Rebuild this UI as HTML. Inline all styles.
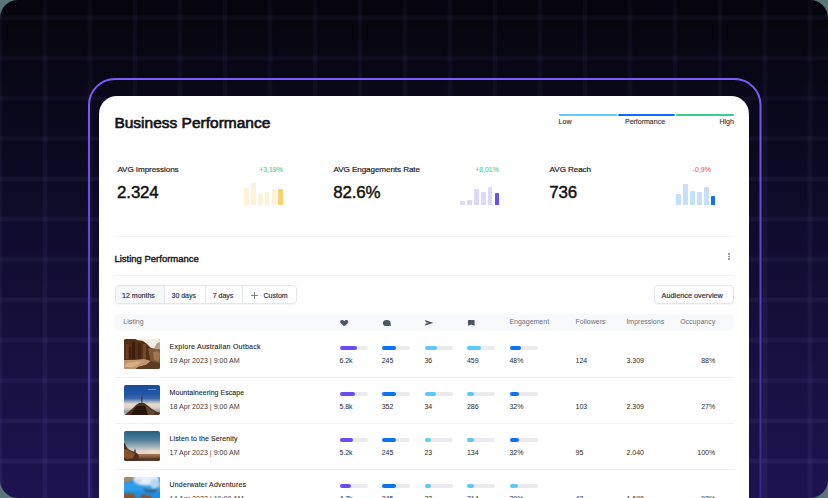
<!DOCTYPE html>
<html><head><meta charset="utf-8">
<style>
*{box-sizing:border-box;margin:0;padding:0}
html,body{width:828px;height:498px;overflow:hidden;background:#5a7479}
body{position:relative;font-family:"Liberation Sans",sans-serif;color:#1a1a1a}
.bg{position:absolute;left:0;top:0;width:828px;height:498px;border-radius:18px;overflow:hidden;
background:linear-gradient(to bottom,#06050d 0%,#0b0920 30%,#160f3b 65%,#1d1350 100%)}
.grid{position:absolute;left:0;top:0;width:828px;height:498px;
background-image:linear-gradient(to right,transparent 0,rgba(165,150,235,0.075) 1.5px,rgba(165,150,235,0.075) 4.5px,transparent 6px),
linear-gradient(to bottom,transparent 0,rgba(165,150,235,0.075) 1.5px,rgba(165,150,235,0.075) 4.5px,transparent 6px);
background-size:45px 100%,100% 40.3px;background-position:-3px 0,0 14.8px;-webkit-mask-image:linear-gradient(to bottom,rgba(0,0,0,0.55),#000);mask-image:linear-gradient(to bottom,rgba(0,0,0,0.55),#000)}
.frame{position:absolute;left:88px;top:78px}
.card{position:absolute;left:99px;top:96px;width:650px;height:420px;background:#fff;border-radius:18px}
.t{position:absolute;white-space:nowrap}
.abs{position:absolute}
</style></head><body>
<div class="bg"><div class="grid"></div></div>
<svg class="frame" width="674" height="430" viewBox="0 0 674 430">
<defs><linearGradient id="fg" gradientUnits="userSpaceOnUse" x1="0" y1="0" x2="0" y2="420"><stop offset="0" stop-color="#7c5df9"/><stop offset="0.34" stop-color="#6349d9"/><stop offset="0.77" stop-color="#4434a2"/><stop offset="1" stop-color="#38298a"/></linearGradient></defs>
<rect x="1" y="1" width="671.5" height="460" rx="26" ry="26" fill="none" stroke="url(#fg)" stroke-width="2"/>
</svg>
<div class="card"></div>
<div class="t" style="left:114.40px;top:115px;font-size:15.5px;line-height:15.5px;font-weight:400;color:#121212;-webkit-text-stroke:0.65px #121212">Business Performance</div>
<div class="abs " style="left:559.00px;top:114.00px;width:57.50px;height:2.00px;background:#5ecbfa;border-radius:1px"></div>
<div class="abs " style="left:618.00px;top:114.00px;width:57.00px;height:2.00px;background:#0b6dff;border-radius:1px"></div>
<div class="abs " style="left:676.00px;top:114.00px;width:57.50px;height:2.00px;background:#36cf8c;border-radius:1px"></div>
<div class="t" style="left:558.60px;top:118px;font-size:7px;line-height:7px;font-weight:400;color:#333;-webkit-text-stroke:0.12px #333">Low</div>
<div class="t" style="left:645.00px;transform:translateX(-50%);top:118px;font-size:7px;line-height:7px;font-weight:400;color:#333;-webkit-text-stroke:0.12px #333">Performance</div>
<div class="t" style="right:94.20px;top:118px;font-size:7px;line-height:7px;font-weight:400;color:#333;-webkit-text-stroke:0.12px #333">High</div>
<div class="t" style="left:117.40px;top:166px;font-size:8.1px;line-height:8.1px;font-weight:400;color:#1c1c1c;letter-spacing:-0.08px;-webkit-text-stroke:0.2px #1c1c1c">AVG Impressions</div>
<div class="t" style="left:117.10px;top:185px;font-size:16.9px;line-height:16.9px;font-weight:400;color:#111;letter-spacing:-0.15px;-webkit-text-stroke:0.45px #111">2.324</div>
<div class="t" style="right:545.20px;top:167px;font-size:6.9px;line-height:6.9px;font-weight:400;color:#4fd39a;-webkit-text-stroke:0.12px #4fd39a">+3,19%</div>
<div class="abs " style="left:244.20px;top:187.90px;width:4.50px;height:17.10px;background:#fdf1d8;border-radius:1px 1px 0 0"></div>
<div class="abs " style="left:251.20px;top:183.30px;width:4.50px;height:21.70px;background:#fdf1d8;border-radius:1px 1px 0 0"></div>
<div class="abs " style="left:258.10px;top:194.10px;width:4.50px;height:10.90px;background:#fdf1d8;border-radius:1px 1px 0 0"></div>
<div class="abs " style="left:264.90px;top:191.90px;width:4.50px;height:13.10px;background:#fdf1d8;border-radius:1px 1px 0 0"></div>
<div class="abs " style="left:271.80px;top:189.10px;width:4.50px;height:15.90px;background:#fdf1d8;border-radius:1px 1px 0 0"></div>
<div class="abs " style="left:278.40px;top:188.60px;width:4.50px;height:16.40px;background:#fcd06e;border-radius:1px 1px 0 0"></div>
<div class="t" style="left:333.50px;top:166px;font-size:8.1px;line-height:8.1px;font-weight:400;color:#1c1c1c;letter-spacing:-0.08px;-webkit-text-stroke:0.2px #1c1c1c">AVG Engagements Rate</div>
<div class="t" style="left:333.20px;top:185px;font-size:16.9px;line-height:16.9px;font-weight:400;color:#111;letter-spacing:-0.15px;-webkit-text-stroke:0.45px #111">82.6%</div>
<div class="t" style="right:329.20px;top:167px;font-size:6.9px;line-height:6.9px;font-weight:400;color:#4fd39a;-webkit-text-stroke:0.12px #4fd39a">+8,01%</div>
<div class="abs " style="left:460.20px;top:201.20px;width:4.50px;height:3.80px;background:#ddd7fd;border-radius:1px 1px 0 0"></div>
<div class="abs " style="left:467.20px;top:200.20px;width:4.50px;height:4.80px;background:#ddd7fd;border-radius:1px 1px 0 0"></div>
<div class="abs " style="left:474.10px;top:189.30px;width:4.50px;height:15.70px;background:#ddd7fd;border-radius:1px 1px 0 0"></div>
<div class="abs " style="left:481.00px;top:191.90px;width:4.50px;height:13.10px;background:#ddd7fd;border-radius:1px 1px 0 0"></div>
<div class="abs " style="left:487.90px;top:186.90px;width:4.50px;height:18.10px;background:#ddd7fd;border-radius:1px 1px 0 0"></div>
<div class="abs " style="left:494.70px;top:193.30px;width:4.50px;height:11.70px;background:#6b4ef2;border-radius:1px 1px 0 0"></div>
<div class="t" style="left:549.60px;top:166px;font-size:8.1px;line-height:8.1px;font-weight:400;color:#1c1c1c;letter-spacing:-0.08px;-webkit-text-stroke:0.2px #1c1c1c">AVG Reach</div>
<div class="t" style="left:549.30px;top:185px;font-size:16.9px;line-height:16.9px;font-weight:400;color:#111;letter-spacing:-0.15px;-webkit-text-stroke:0.45px #111">736</div>
<div class="t" style="right:117.20px;top:167px;font-size:6.9px;line-height:6.9px;font-weight:400;color:#f26b6b;-webkit-text-stroke:0.12px #f26b6b">-0,9%</div>
<div class="abs " style="left:676.40px;top:194.10px;width:4.50px;height:10.90px;background:#c6e0fc;border-radius:1px 1px 0 0"></div>
<div class="abs " style="left:683.30px;top:183.60px;width:4.50px;height:21.40px;background:#c6e0fc;border-radius:1px 1px 0 0"></div>
<div class="abs " style="left:690.20px;top:190.80px;width:4.50px;height:14.20px;background:#c6e0fc;border-radius:1px 1px 0 0"></div>
<div class="abs " style="left:697.10px;top:192.10px;width:4.50px;height:12.90px;background:#c6e0fc;border-radius:1px 1px 0 0"></div>
<div class="abs " style="left:704.00px;top:187.30px;width:4.50px;height:17.70px;background:#c6e0fc;border-radius:1px 1px 0 0"></div>
<div class="abs " style="left:710.80px;top:196.10px;width:4.50px;height:8.90px;background:#0b73f4;border-radius:1px 1px 0 0"></div>
<div class="abs " style="left:114.00px;top:236.00px;width:619.50px;height:1.00px;background:#f4f4f6"></div>
<div class="t" style="left:114.40px;top:254px;font-size:9.5px;line-height:9.5px;font-weight:400;color:#161616;-webkit-text-stroke:0.4px #161616">Listing Performance</div>
<div class="abs " style="left:728.00px;top:253.20px;width:1.60px;height:1.60px;background:#8d9099;border-radius:50%"></div>
<div class="abs " style="left:728.00px;top:255.70px;width:1.60px;height:1.60px;background:#8d9099;border-radius:50%"></div>
<div class="abs " style="left:728.00px;top:258.20px;width:1.60px;height:1.60px;background:#8d9099;border-radius:50%"></div>
<div class="abs " style="left:114.00px;top:275.00px;width:619.50px;height:1.00px;background:#f1f1f3"></div>
<div class="abs " style="left:114.50px;top:285.40px;width:182.20px;height:18.90px;border:1px solid #e4e6eb;border-radius:4px;box-shadow:0 1px 1px rgba(16,24,40,0.04);overflow:hidden"></div>
<div class="abs " style="left:115.50px;top:286.40px;width:48.00px;height:16.90px;background:#f7f8fa;border-radius:3px 0 0 3px"></div>
<div class="abs " style="left:163.50px;top:286.40px;width:1.00px;height:16.90px;background:#e4e6eb"></div>
<div class="abs " style="left:204.90px;top:286.40px;width:1.00px;height:16.90px;background:#e4e6eb"></div>
<div class="abs " style="left:241.70px;top:286.40px;width:1.00px;height:16.90px;background:#e4e6eb"></div>
<div class="t" style="left:122.10px;top:292px;font-size:7px;line-height:7px;font-weight:400;color:#2d3344;-webkit-text-stroke:0.18px #2d3344">12 months</div>
<div class="t" style="left:171.50px;top:292px;font-size:7px;line-height:7px;font-weight:400;color:#2d3344;-webkit-text-stroke:0.18px #2d3344">30 days</div>
<div class="t" style="left:212.70px;top:292px;font-size:7px;line-height:7px;font-weight:400;color:#2d3344;-webkit-text-stroke:0.18px #2d3344">7 days</div>
<div class="abs " style="left:251.40px;top:295.20px;width:6.40px;height:0.75px;background:#7d8290"></div>
<div class="abs " style="left:254.20px;top:292.20px;width:0.75px;height:6.40px;background:#7d8290"></div>
<div class="t" style="left:263.50px;top:292px;font-size:7px;line-height:7px;font-weight:400;color:#2d3344;-webkit-text-stroke:0.18px #2d3344">Custom</div>
<div class="abs " style="left:654.00px;top:285.20px;width:79.50px;height:19.10px;border:1px solid #e4e6eb;border-radius:4px;box-shadow:0 1px 1px rgba(16,24,40,0.04)"></div>
<div class="t" style="left:661.60px;top:292px;font-size:7.3px;line-height:7.3px;font-weight:400;color:#2d3344;-webkit-text-stroke:0.18px #2d3344">Audience overview</div>
<div class="abs " style="left:114.30px;top:314.00px;width:620.00px;height:17.40px;background:#f8f9fb;border-radius:5px"></div>
<div class="t" style="left:123.30px;top:318px;font-size:7px;line-height:7px;font-weight:400;color:#6b7280;">Listing</div>
<svg class="abs" style="left:340px;top:319.5px" width="8.5" height="6.5" viewBox="0 0 17 13"><path d="M8.5 13 L1.6 6.6 C-0.6 4.5 0.2 0.6 3.6 0.2 C5.6 0 7.3 1.1 8.5 2.6 C9.7 1.1 11.4 0 13.4 0.2 C16.8 0.6 17.6 4.5 15.4 6.6 Z" fill="#4b5563"/></svg>
<svg class="abs" style="left:382.8px;top:319.6px" width="8.3" height="6.6" viewBox="0 0 16.6 13.2"><ellipse cx="7.6" cy="6.3" rx="7.6" ry="6.3" fill="#4b5563"/><path d="M11.5 10 L16.6 13.2 L14.5 7.5 Z" fill="#4b5563"/></svg>
<svg class="abs" style="left:424.8px;top:320px" width="8.2" height="5.8" viewBox="0 0 16.4 11.6"><path d="M0 0 L16.4 5.8 L0 11.6 L1.5 7 L8 5.8 L1.5 4.6 Z" fill="#4b5563"/></svg>
<svg class="abs" style="left:468.4px;top:320px" width="6.6" height="5.8" viewBox="0 0 13.2 11.6"><path d="M0 1 Q0 0 1 0 L12.2 0 Q13.2 0 13.2 1 L13.2 11.6 L6.6 8.8 L0 11.6 Z" fill="#4b5563"/></svg>
<div class="t" style="left:509.40px;top:318px;font-size:7px;line-height:7px;font-weight:400;color:#6b7280;">Engagement</div>
<div class="t" style="left:575.60px;top:318px;font-size:7px;line-height:7px;font-weight:400;color:#6b7280;">Followers</div>
<div class="t" style="left:626.40px;top:318px;font-size:7px;line-height:7px;font-weight:400;color:#6b7280;">Impressions</div>
<div class="t" style="right:112.80px;top:318px;font-size:7px;line-height:7px;font-weight:400;color:#6b7280;">Occupancy</div>
<div class="abs" style="left:124px;top:339.40px;width:36px;height:30px;border-radius:2px;overflow:hidden"><svg width="36" height="30" viewBox="0 0 36 30"><rect width="36" height="30" fill="#52301a"/><g style="filter:blur(0.6px)">
<rect x="-3" y="-3" width="42" height="36" fill="#52301a"/>
<polygon points="6,-3 39,-3 39,3 34,4 31,10 27,9 23,5 19,2 13,1" fill="#f6ecdf"/>
<polygon points="29,11 33,4 39,3 39,13" fill="#b8a08c"/>
<rect x="8" y="3" width="3" height="17" fill="#3a1e0c"/><rect x="14" y="4" width="2.5" height="16" fill="#40220e"/><rect x="2" y="5" width="2.5" height="15" fill="#6a3e20"/>
<rect x="19" y="5" width="3" height="15" fill="#73482a"/><rect x="5" y="8" width="2" height="12" fill="#3e200e"/>
<polygon points="24,9 39,11 39,26 27,24" fill="#7e5636"/>
<polygon points="29,13 33,12 36,14 35,22 30,21" fill="#a07856"/>
<polygon points="-3,21 10,21 20,20 27,22 22,26 14,28 9,33 -3,33" fill="#c09670"/>
<polygon points="3,24 12,23 18,22 14,26 8,28 1,28" fill="#d8b088"/>
<polygon points="14,28 22,26 27,22 39,25 39,33 9,33" fill="#5e3a20"/>
</g></svg></div>
<div class="t" style="left:169.60px;top:343px;font-size:7px;line-height:7px;font-weight:400;color:#1c1c1c;letter-spacing:0.26px;-webkit-text-stroke:0.1px #1c1c1c">Explore Australian Outback</div>
<div class="t" style="left:169.60px;top:358px;font-size:7.1px;line-height:7.1px;font-weight:400;color:#3c3c3c;">19 Apr 2023 | 9:00 AM</div>
<div class="abs " style="left:339.60px;top:346.00px;width:28.40px;height:4.00px;background:#ebebef;border-radius:2px"></div>
<div class="abs " style="left:339.60px;top:346.00px;width:17.00px;height:4.00px;background:#6c4cf1;border-radius:2px"></div>
<div class="t" style="left:339.40px;top:357px;font-size:7px;line-height:7px;font-weight:400;color:#2a2a2a;">6.2k</div>
<div class="abs " style="left:381.90px;top:346.00px;width:28.40px;height:4.00px;background:#ebebef;border-radius:2px"></div>
<div class="abs " style="left:381.90px;top:346.00px;width:14.40px;height:4.00px;background:#0b74f5;border-radius:2px"></div>
<div class="t" style="left:381.70px;top:357px;font-size:7px;line-height:7px;font-weight:400;color:#2a2a2a;">245</div>
<div class="abs " style="left:424.60px;top:346.00px;width:28.40px;height:4.00px;background:#ebebef;border-radius:2px"></div>
<div class="abs " style="left:424.60px;top:346.00px;width:12.50px;height:4.00px;background:#5ccaf9;border-radius:2px"></div>
<div class="t" style="left:424.40px;top:357px;font-size:7px;line-height:7px;font-weight:400;color:#2a2a2a;">36</div>
<div class="abs " style="left:467.10px;top:346.00px;width:28.40px;height:4.00px;background:#ebebef;border-radius:2px"></div>
<div class="abs " style="left:467.10px;top:346.00px;width:13.50px;height:4.00px;background:#5ccaf9;border-radius:2px"></div>
<div class="t" style="left:466.90px;top:357px;font-size:7px;line-height:7px;font-weight:400;color:#2a2a2a;">459</div>
<div class="abs " style="left:509.60px;top:346.00px;width:28.40px;height:4.00px;background:#ebebef;border-radius:2px"></div>
<div class="abs " style="left:509.60px;top:346.00px;width:11.80px;height:4.00px;background:#0b74f5;border-radius:2px"></div>
<div class="t" style="left:509.40px;top:357px;font-size:7px;line-height:7px;font-weight:400;color:#2a2a2a;">48%</div>
<div class="t" style="left:575.50px;top:357px;font-size:7px;line-height:7px;font-weight:400;color:#2a2a2a;">124</div>
<div class="t" style="left:626.50px;top:357px;font-size:7px;line-height:7px;font-weight:400;color:#2a2a2a;">3.309</div>
<div class="t" style="right:112.80px;top:357px;font-size:7px;line-height:7px;font-weight:400;color:#2a2a2a;">88%</div>
<div class="abs " style="left:114.80px;top:377.00px;width:619.00px;height:1.00px;background:#f0f0f2"></div>
<div class="abs" style="left:124px;top:385.40px;width:36px;height:30px;border-radius:2px;overflow:hidden"><svg width="36" height="30" viewBox="0 0 36 30"><defs><linearGradient id="s2" x1="0" y1="0" x2="0" y2="1"><stop offset="0" stop-color="#1a4a9a"/><stop offset="0.3" stop-color="#2256a6"/><stop offset="0.46" stop-color="#3e6aac"/><stop offset="0.55" stop-color="#98aac0"/><stop offset="0.64" stop-color="#e6dccb"/><stop offset="0.76" stop-color="#d8d2c8"/><stop offset="0.88" stop-color="#9aa0aa"/><stop offset="1" stop-color="#b8b2aa"/></linearGradient></defs>
<rect width="36" height="30" fill="url(#s2)"/><g style="filter:blur(0.55px)">
<polygon points="-3,33 3,28 8,24 12,20 15,18 20,18 23,20 28,24 33,27 39,28 39,33" fill="#4a3022"/>
<polygon points="5,33 9,26 13,21 21,21 26,26 31,33" fill="#26160c"/>
<polygon points="21,20 26,24 31,27 29,33 25,33" fill="#664634"/>
<rect x="24" y="4" width="8" height="1" fill="#c8d4ea" opacity="0.5"/>
</g><rect x="17.2" y="11" width="1.3" height="7.5" fill="#4a3c34"/></svg></div>
<div class="t" style="left:169.60px;top:389px;font-size:7px;line-height:7px;font-weight:400;color:#1c1c1c;letter-spacing:0.05px;-webkit-text-stroke:0.1px #1c1c1c">Mountaineering Escape</div>
<div class="t" style="left:169.60px;top:404px;font-size:7.1px;line-height:7.1px;font-weight:400;color:#3c3c3c;">18 Apr 2023 | 9:00 AM</div>
<div class="abs " style="left:339.60px;top:392.00px;width:28.40px;height:4.00px;background:#ebebef;border-radius:2px"></div>
<div class="abs " style="left:339.60px;top:392.00px;width:15.70px;height:4.00px;background:#6c4cf1;border-radius:2px"></div>
<div class="t" style="left:339.40px;top:403px;font-size:7px;line-height:7px;font-weight:400;color:#2a2a2a;">5.8k</div>
<div class="abs " style="left:381.90px;top:392.00px;width:28.40px;height:4.00px;background:#ebebef;border-radius:2px"></div>
<div class="abs " style="left:381.90px;top:392.00px;width:14.50px;height:4.00px;background:#0b74f5;border-radius:2px"></div>
<div class="t" style="left:381.70px;top:403px;font-size:7px;line-height:7px;font-weight:400;color:#2a2a2a;">352</div>
<div class="abs " style="left:424.60px;top:392.00px;width:28.40px;height:4.00px;background:#ebebef;border-radius:2px"></div>
<div class="abs " style="left:424.60px;top:392.00px;width:11.40px;height:4.00px;background:#5ccaf9;border-radius:2px"></div>
<div class="t" style="left:424.40px;top:403px;font-size:7px;line-height:7px;font-weight:400;color:#2a2a2a;">34</div>
<div class="abs " style="left:467.10px;top:392.00px;width:28.40px;height:4.00px;background:#ebebef;border-radius:2px"></div>
<div class="abs " style="left:467.10px;top:392.00px;width:7.00px;height:4.00px;background:#5ccaf9;border-radius:2px"></div>
<div class="t" style="left:466.90px;top:403px;font-size:7px;line-height:7px;font-weight:400;color:#2a2a2a;">286</div>
<div class="abs " style="left:509.60px;top:392.00px;width:28.40px;height:4.00px;background:#ebebef;border-radius:2px"></div>
<div class="abs " style="left:509.60px;top:392.00px;width:9.40px;height:4.00px;background:#0b74f5;border-radius:2px"></div>
<div class="t" style="left:509.40px;top:403px;font-size:7px;line-height:7px;font-weight:400;color:#2a2a2a;">32%</div>
<div class="t" style="left:575.50px;top:403px;font-size:7px;line-height:7px;font-weight:400;color:#2a2a2a;">103</div>
<div class="t" style="left:626.50px;top:403px;font-size:7px;line-height:7px;font-weight:400;color:#2a2a2a;">2.309</div>
<div class="t" style="right:112.80px;top:403px;font-size:7px;line-height:7px;font-weight:400;color:#2a2a2a;">27%</div>
<div class="abs " style="left:114.80px;top:423.00px;width:619.00px;height:1.00px;background:#f0f0f2"></div>
<div class="abs" style="left:124px;top:431.40px;width:36px;height:30px;border-radius:2px;overflow:hidden"><svg width="36" height="30" viewBox="0 0 36 30"><defs><linearGradient id="s3" x1="0" y1="0" x2="0" y2="1"><stop offset="0" stop-color="#245f80"/><stop offset="0.3" stop-color="#4e7f98"/><stop offset="0.52" stop-color="#a4b2ba"/><stop offset="0.68" stop-color="#e2d8d0"/><stop offset="0.75" stop-color="#f0d4b6"/><stop offset="0.78" stop-color="#a07658"/><stop offset="0.88" stop-color="#7c5440"/><stop offset="1" stop-color="#5e3c2a"/></linearGradient>
<radialGradient id="g3" cx="0.75" cy="0.76" r="0.35"><stop offset="0" stop-color="#fbe0c0" stop-opacity="0.9"/><stop offset="1" stop-color="#fbe0c0" stop-opacity="0"/></radialGradient></defs>
<rect width="36" height="30" fill="url(#s3)"/><rect x="10" y="14" width="26" height="9" fill="url(#g3)"/><g style="filter:blur(0.5px)">
<polygon points="-3,12 1,12 2,15 4,18 8,20 11,21 14,23 15,26 12,33 -3,33" fill="#4e2e1c"/>
<polygon points="0,18 4,19 8,21 11,23 9,27 3,28 -3,26" fill="#83522f"/>
<rect x="10.2" y="18.5" width="1.6" height="3.2" fill="#3a4656"/>
<rect x="14" y="27" width="25" height="6" fill="#5a3826"/>
</g></svg></div>
<div class="t" style="left:169.60px;top:435px;font-size:7px;line-height:7px;font-weight:400;color:#1c1c1c;letter-spacing:0.1px;-webkit-text-stroke:0.1px #1c1c1c">Listen to the Serenity</div>
<div class="t" style="left:169.60px;top:450px;font-size:7.1px;line-height:7.1px;font-weight:400;color:#3c3c3c;">17 Apr 2023 | 9:00 AM</div>
<div class="abs " style="left:339.60px;top:438.00px;width:28.40px;height:4.00px;background:#ebebef;border-radius:2px"></div>
<div class="abs " style="left:339.60px;top:438.00px;width:13.70px;height:4.00px;background:#6c4cf1;border-radius:2px"></div>
<div class="t" style="left:339.40px;top:449px;font-size:7px;line-height:7px;font-weight:400;color:#2a2a2a;">5.2k</div>
<div class="abs " style="left:381.90px;top:438.00px;width:28.40px;height:4.00px;background:#ebebef;border-radius:2px"></div>
<div class="abs " style="left:381.90px;top:438.00px;width:14.50px;height:4.00px;background:#0b74f5;border-radius:2px"></div>
<div class="t" style="left:381.70px;top:449px;font-size:7px;line-height:7px;font-weight:400;color:#2a2a2a;">245</div>
<div class="abs " style="left:424.60px;top:438.00px;width:28.40px;height:4.00px;background:#ebebef;border-radius:2px"></div>
<div class="abs " style="left:424.60px;top:438.00px;width:6.90px;height:4.00px;background:#5ccaf9;border-radius:2px"></div>
<div class="t" style="left:424.40px;top:449px;font-size:7px;line-height:7px;font-weight:400;color:#2a2a2a;">23</div>
<div class="abs " style="left:467.10px;top:438.00px;width:28.40px;height:4.00px;background:#ebebef;border-radius:2px"></div>
<div class="abs " style="left:467.10px;top:438.00px;width:7.00px;height:4.00px;background:#5ccaf9;border-radius:2px"></div>
<div class="t" style="left:466.90px;top:449px;font-size:7px;line-height:7px;font-weight:400;color:#2a2a2a;">134</div>
<div class="abs " style="left:509.60px;top:438.00px;width:28.40px;height:4.00px;background:#ebebef;border-radius:2px"></div>
<div class="abs " style="left:509.60px;top:438.00px;width:9.40px;height:4.00px;background:#0b74f5;border-radius:2px"></div>
<div class="t" style="left:509.40px;top:449px;font-size:7px;line-height:7px;font-weight:400;color:#2a2a2a;">32%</div>
<div class="t" style="left:575.50px;top:449px;font-size:7px;line-height:7px;font-weight:400;color:#2a2a2a;">95</div>
<div class="t" style="left:626.50px;top:449px;font-size:7px;line-height:7px;font-weight:400;color:#2a2a2a;">2.040</div>
<div class="t" style="right:112.80px;top:449px;font-size:7px;line-height:7px;font-weight:400;color:#2a2a2a;">100%</div>
<div class="abs " style="left:114.80px;top:469.00px;width:619.00px;height:1.00px;background:#f0f0f2"></div>
<div class="abs" style="left:124px;top:477.40px;width:36px;height:30px;border-radius:2px;overflow:hidden"><svg width="36" height="30" viewBox="0 0 36 30"><rect width="36" height="30" fill="#1d8fe4"/><g style="filter:blur(0.8px)">
<rect x="-3" y="-3" width="42" height="36" fill="#1d8fe4"/>
<rect x="-3" y="6" width="42" height="8" fill="#2f9cec"/>
<ellipse cx="22" cy="2" rx="13" ry="6.5" fill="#e6eef6"/>
<ellipse cx="31" cy="7" rx="5" ry="5" fill="#b4d6f2"/>
<ellipse cx="14" cy="4" rx="4" ry="2" fill="#c8dcee"/>
<polygon points="-3,-3 9,-3 10,2 5,5 -3,6" fill="#a68a6e"/>
<polygon points="19,11 24,13 30,13 34,10 31,15 24,15 20,13" fill="#3a4c5e"/>
<polygon points="-3,17 6,16 11,17 12,24 -3,24" fill="#8a5434"/>
<polygon points="16,24 17,18 21,17 23,19 27,18 28,24" fill="#8a5434"/>
</g></svg></div>
<div class="t" style="left:169.60px;top:481px;font-size:7px;line-height:7px;font-weight:400;color:#1c1c1c;letter-spacing:0.16px;-webkit-text-stroke:0.1px #1c1c1c">Underwater Adventures</div>
<div class="t" style="left:169.60px;top:496px;font-size:7.1px;line-height:7.1px;font-weight:400;color:#3c3c3c;">14 Apr 2023 | 10:00 AM</div>
<div class="abs " style="left:339.60px;top:484.00px;width:28.40px;height:4.00px;background:#ebebef;border-radius:2px"></div>
<div class="abs " style="left:339.60px;top:484.00px;width:11.00px;height:4.00px;background:#6c4cf1;border-radius:2px"></div>
<div class="t" style="left:339.40px;top:495px;font-size:7px;line-height:7px;font-weight:400;color:#2a2a2a;">4.7k</div>
<div class="abs " style="left:381.90px;top:484.00px;width:28.40px;height:4.00px;background:#ebebef;border-radius:2px"></div>
<div class="abs " style="left:381.90px;top:484.00px;width:14.50px;height:4.00px;background:#0b74f5;border-radius:2px"></div>
<div class="t" style="left:381.70px;top:495px;font-size:7px;line-height:7px;font-weight:400;color:#2a2a2a;">245</div>
<div class="abs " style="left:424.60px;top:484.00px;width:28.40px;height:4.00px;background:#ebebef;border-radius:2px"></div>
<div class="abs " style="left:424.60px;top:484.00px;width:6.90px;height:4.00px;background:#5ccaf9;border-radius:2px"></div>
<div class="t" style="left:424.40px;top:495px;font-size:7px;line-height:7px;font-weight:400;color:#2a2a2a;">23</div>
<div class="abs " style="left:467.10px;top:484.00px;width:28.40px;height:4.00px;background:#ebebef;border-radius:2px"></div>
<div class="abs " style="left:467.10px;top:484.00px;width:7.00px;height:4.00px;background:#5ccaf9;border-radius:2px"></div>
<div class="t" style="left:466.90px;top:495px;font-size:7px;line-height:7px;font-weight:400;color:#2a2a2a;">214</div>
<div class="abs " style="left:509.60px;top:484.00px;width:28.40px;height:4.00px;background:#ebebef;border-radius:2px"></div>
<div class="abs " style="left:509.60px;top:484.00px;width:8.00px;height:4.00px;background:#5ccaf9;border-radius:2px"></div>
<div class="t" style="left:509.40px;top:495px;font-size:7px;line-height:7px;font-weight:400;color:#2a2a2a;">29%</div>
<div class="t" style="left:575.50px;top:495px;font-size:7px;line-height:7px;font-weight:400;color:#2a2a2a;">42</div>
<div class="t" style="left:626.50px;top:495px;font-size:7px;line-height:7px;font-weight:400;color:#2a2a2a;">1.690</div>
<div class="t" style="right:112.80px;top:495px;font-size:7px;line-height:7px;font-weight:400;color:#2a2a2a;">92%</div>
</body></html>
